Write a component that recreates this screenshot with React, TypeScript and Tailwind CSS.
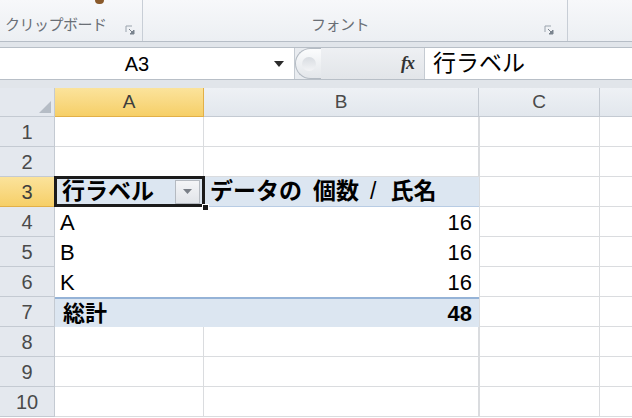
import React from 'react'

const cellFont = { fontFamily: '"Liberation Sans", "Noto Sans CJK JP", sans-serif' }

const rows = [1, 2, 3, 4, 5, 6, 7, 8, 9, 10]

function Launcher() {
    return (
        <svg width="11" height="11" viewBox="0 0 11 11" className="shrink-0">
            <path d="M1 1h6M1 1v6" stroke="#9aa3ad" strokeWidth="1" fill="none" />
            <path d="M4 4l5 5M9 5v4H5z" stroke="#7b848e" strokeWidth="1" fill="#7b848e" />
        </svg>
    )
}

function RowHeader({ n }: { n: number }) {
    const sel = n === 3
    return (
        <div
            className={`w-[55px] shrink-0 flex items-center justify-center border-r border-b text-[20px] ${sel
                ? 'bg-gradient-to-b from-[#fbe39b] to-[#f6cf67] border-[#e2b048] text-[#3d3d3d]'
                : 'bg-[#e4e8ee] border-[#c4cad2] text-[#4a4a4a]'
                }`}
            style={cellFont}
        >
            {n}
        </div>
    )
}

function DataRow({ n }: { n: number }) {
    const pivotBody = n >= 4 && n <= 6
    const total = n === 7
    const head = n === 3
    const labels: Record<number, string> = { 4: 'A', 5: 'B', 6: 'K' }

    return (
        <div className="flex h-[30px]">
            <RowHeader n={n} />
            {head && (
                <>
                    <div className="relative w-[149px] shrink-0 bg-[#dce6f1] border-b border-[#b8cce4] flex items-center pl-[7px] pr-[4px]">
                        <span className="font-bold text-[23px] text-black flex-1 whitespace-nowrap" style={cellFont}>行ラベル</span>
                        <div className="w-[25px] h-[24px] shrink-0 bg-gradient-to-b from-[#f4f5f7] to-[#e1e4e9] border border-[#b5bac1] flex items-center justify-center">
                            <svg width="9" height="5" viewBox="0 0 9 5"><path d="M0 0h9L4.5 5z" fill="#7a7f87" /></svg>
                        </div>
                        <div className="absolute left-[-1px] top-[-1px] right-[-1px] bottom-[-1px] border-[3px] border-[#1b1b1b]" />
                        <div className="absolute right-[-5px] bottom-[-5px] w-[7px] h-[7px] bg-[#1b1b1b] border border-white" />
                    </div>
                    <div className="w-[275px] shrink-0 bg-[#dce6f1] border-b border-[#b8cce4] flex items-center pl-[6px] font-bold text-[23px] text-black whitespace-nowrap" style={cellFont}>
                        <span>データの</span>
                        <span className="ml-[11px]">個数</span>
                        <span className="ml-[11px] font-normal">/</span>
                        <span className="ml-[14px]">氏名</span>
                    </div>
                </>
            )}
            {pivotBody && (
                <>
                    <div className="w-[149px] shrink-0 bg-white flex items-center pl-[5px]">
                        <span className="text-[22px] text-black" style={cellFont}>{labels[n]}</span>
                    </div>
                    <div className="w-[275px] shrink-0 bg-white flex items-center justify-end pr-[7px]">
                        <span className="text-[22px] text-black" style={cellFont}>16</span>
                    </div>
                </>
            )}
            {total && (
                <>
                    <div className="w-[149px] shrink-0 bg-[#dce6f1] border-t-2 border-[#95b3d7] flex items-center pl-[8px]">
                        <span className="font-bold text-[22px] text-black" style={cellFont}>総計</span>
                    </div>
                    <div className="w-[275px] shrink-0 bg-[#dce6f1] border-t-2 border-[#95b3d7] flex items-center justify-end pr-[7px]">
                        <span className="font-bold text-[22px] text-black" style={cellFont}>48</span>
                    </div>
                </>
            )}
            {!head && !pivotBody && !total && (
                <>
                    <div className="w-[149px] shrink-0 bg-white border-r border-b border-[#dadcdf]" />
                    <div className="w-[275px] shrink-0 bg-white border-r border-b border-[#dadcdf]" />
                </>
            )}
            <div className="w-[121px] shrink-0 bg-white border-l border-r border-b border-[#dadcdf]" />
            <div className="flex-1 bg-white border-b border-[#dadcdf]" />
        </div>
    )
}

export default function App() {
    return (
        <div className="w-[632px] h-[418px] overflow-hidden bg-white flex flex-col select-none">
            {/* Ribbon bottom */}
            <div className="h-[42px] shrink-0 flex bg-gradient-to-b from-[#f7f8fa] to-[#eceff3] border-b border-[#b6bdc6]">
                <div className="w-[143px] shrink-0 relative flex items-end pb-[5px] pl-[5px] border-r border-[#c8ced6]">
                    <div className="absolute left-[95px] top-[-4px] w-[9px] h-[8px] rounded-full bg-[#8a5a2b]" />
                    <span className="w-[120px] text-[15px] text-[#6a6f76] tracking-[-0.5px] whitespace-nowrap" style={cellFont}>クリップボード</span>
                    <Launcher />
                </div>
                <div className="w-[425px] shrink-0 flex items-end pb-[5px] pl-[168px] pr-[12px] border-r border-[#c8ced6]">
                    <span className="flex-1 text-[15px] text-[#6a6f76] tracking-[-0.5px] whitespace-nowrap" style={cellFont}>フォント</span>
                    <Launcher />
                </div>
                <div className="flex-1" />
            </div>

            {/* Formula bar */}
            <div className="h-[46px] shrink-0 bg-[#e1e5ea] pt-[5px] pb-[8px]">
                <div className="h-[33px] flex border-y border-[#b8bfc7] bg-[#e9ecf0]">
                    <div className="w-[295px] shrink-0 bg-white flex items-center border-r border-[#c5cbd2]">
                        <span className="flex-1 text-center text-[20px] text-black" style={cellFont}>A3</span>
                        <svg width="10" height="6" viewBox="0 0 10 6" className="mr-[10px]"><path d="M0 0h10L5 6z" fill="#2b2b2b" /></svg>
                    </div>
                    <div className="w-[129px] shrink-0 flex items-center">
                        <div className="h-[31px] w-[26px] rounded-l-full border border-r-0 border-[#b4bbc3] bg-gradient-to-b from-[#fbfcfd] to-[#e3e6ea] flex items-center justify-center">
                            <div className="w-[14px] h-[14px] rounded-full bg-gradient-to-b from-[#d8dce1] to-[#f3f4f6]" />
                        </div>
                        <div className="flex-1 h-full bg-gradient-to-b from-[#eef0f3] to-[#e2e5e9] flex items-center justify-end pr-[10px]">
                            <span className="font-bold italic text-[18px] text-[#333] tracking-[-1px]" style={{ fontFamily: '"Liberation Serif", serif' }}>fx</span>
                        </div>
                    </div>
                    <div className="flex-1 bg-white flex items-center pl-[8px] border-l border-[#c5cbd2]">
                        <span className="text-[23px] text-black" style={cellFont}>行ラベル</span>
                    </div>
                </div>
            </div>

            {/* Column headers */}
            <div className="h-[29px] shrink-0 flex">
                <div className="w-[55px] shrink-0 bg-[#e4e8ee] border-r border-b border-[#c4cad2] flex items-end justify-end p-[3px]">
                    <svg width="12" height="12" viewBox="0 0 12 12"><path d="M12 0v12H0z" fill="#b5bcc5" /></svg>
                </div>
                <div className="w-[149px] shrink-0 flex items-center justify-center bg-gradient-to-b from-[#fbe39b] to-[#f6cf67] border-r border-b border-[#e2b048] text-[19px] text-[#3d3d3d]" style={cellFont}>A</div>
                <div className="w-[275px] shrink-0 flex items-center justify-center bg-gradient-to-b from-[#eef1f5] to-[#e2e7ed] border-r border-b border-[#c4cad2] text-[19px] text-[#4a4a4a]" style={cellFont}>B</div>
                <div className="w-[121px] shrink-0 flex items-center justify-center bg-gradient-to-b from-[#eef1f5] to-[#e2e7ed] border-r border-b border-[#c4cad2] text-[19px] text-[#4a4a4a]" style={cellFont}>C</div>
                <div className="flex-1 bg-gradient-to-b from-[#eef1f5] to-[#e2e7ed] border-b border-[#c4cad2]" />
            </div>

            {rows.map((n) => (
                <DataRow key={n} n={n} />
            ))}
        </div>
    )
}
